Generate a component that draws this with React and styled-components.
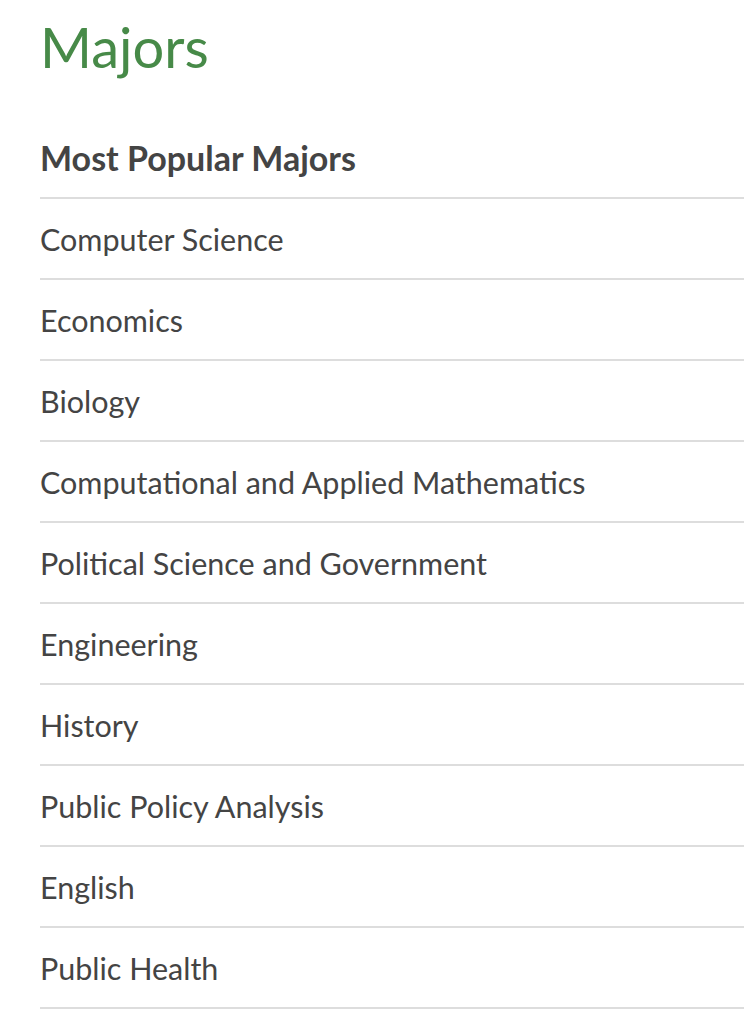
import React from "react";
import styled, { createGlobalStyle } from "styled-components";

const majors = [
    "Computer Science",
    "Economics",
    "Biology",
    "Computational and Applied Mathematics",
    "Political Science and Government",
    "Engineering",
    "History",
    "Public Policy Analysis",
    "English",
    "Public Health",
];

const GlobalStyle = createGlobalStyle`
    body {
        margin: 0;
        background: #ffffff;
        font-family: Lato, "Open Sans", sans-serif;
    }
`;

const Page = styled.div`
    padding-left: 40px;
    overflow: hidden;
`;

const Title = styled.h1`
    margin: 0;
    padding-top: 13px;
    height: 118px;
    box-sizing: border-box;
    font-size: 56px;
    font-weight: 400;
    line-height: 68px;
    color: #478a48;
`;

const List = styled.ul`
    list-style: none;
    margin: 0;
    padding: 0;
`;

const Row = styled.li`
    display: flex;
    align-items: center;
    height: 79px;
    border-bottom: 2px solid #dddddd;
    font-size: ${props => (props.header ? "34px" : "30.5px")};
    font-weight: ${props => (props.header ? 700 : 400)};
    color: #444444;
`;

const App = () => (
    <Page>
        <GlobalStyle />
        <Title>Majors</Title>
        <List>
            <Row header>Most Popular Majors</Row>
            {majors.map(name => (
                <Row key={name}>{name}</Row>
            ))}
        </List>
    </Page>
);

export default App;
